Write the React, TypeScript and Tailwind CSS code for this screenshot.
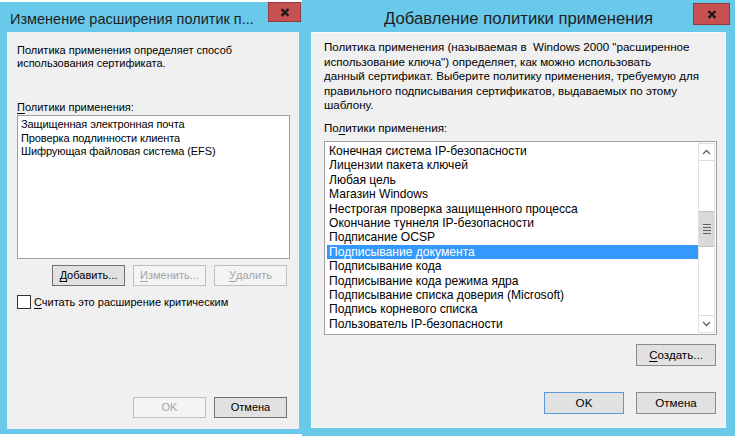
import React from 'react';

type BtnKind = 'default' | 'normal' | 'disabled' | 'focus';

const btnStyles: Record<BtnKind, string> = {
  default: 'border-[#707070] bg-[#e1e1e1] text-black',
  normal: 'border-[#8a8a8a] bg-[#e1e1e1] text-black',
  disabled: 'border-[#bfbfbf] bg-[#f4f4f4] text-[#a3a3a3]',
  focus: 'border-[#5b9bd5] bg-[#e1e1e1] text-black',
};

const Btn = ({
  kind,
  className,
  children,
}: {
  kind: BtnKind;
  className: string;
  children: React.ReactNode;
}) => (
  <div className={`flex items-center justify-center border whitespace-nowrap ${btnStyles[kind]} ${className}`}>
    {children}
  </div>
);

// underlined access key letter
const K = ({ c }: { c: string }) => <span className="underline underline-offset-[2px]">{c}</span>;

const CloseButton = ({ className }: { className: string }) => (
  <div className={`flex items-center justify-center bg-[#c75050] border border-[#8f3b3b] ${className}`}>
    <svg width="10" height="9" viewBox="0 0 10 9">
      <path d="M1.5 1.2 L8.5 7.8 M8.5 1.2 L1.5 7.8" stroke="#1a1a1a" strokeWidth="2.3" />
    </svg>
  </div>
);

const addPolicies = [
  'Конечная система IP-безопасности',
  'Лицензии пакета ключей',
  'Любая цель',
  'Магазин Windows',
  'Нестрогая проверка защищенного процесса',
  'Окончание туннеля IP-безопасности',
  'Подписание OCSP',
  'Подписывание документа',
  'Подписывание кода',
  'Подписывание кода режима ядра',
  'Подписывание списка доверия (Microsoft)',
  'Подпись корневого списка',
  'Пользователь IP-безопасности',
  'Проверка подлинности клиента',
];

const Chevron = ({ up }: { up?: boolean }) => (
  <svg width="9" height="6" viewBox="0 0 9 6">
    <path
      d={up ? 'M1 5 L4.5 1.5 L8 5' : 'M1 1 L4.5 4.5 L8 1'}
      fill="none"
      stroke="#606060"
      strokeWidth="1.3"
    />
  </svg>
);

export default function App() {
  return (
    <div className="relative w-[735px] h-[436px] overflow-hidden bg-white font-['Liberation_Sans',Arial,sans-serif] text-black">
      {/* Left dialog (inactive) */}
      <div className="absolute left-0 top-[2px] w-[306px] h-[432px] bg-[#69c9ea] flex flex-col">
        <div className="h-[30px] shrink-0 flex items-start">
          <div className="pl-[10px] pt-[7px] text-[14.5px] leading-[20px] text-[#1e1e1e] whitespace-nowrap">
            Изменение расширения политик п...
          </div>
          <CloseButton className="ml-auto mr-[5px] w-[33px] h-[20px]" />
        </div>
        <div className="mx-[7px] h-[397px] bg-[#f0f0f0] flex flex-col pl-[10px] text-[11px] leading-[13px]">
          <div className="mt-[12px]">
            Политика применения определяет способ
            <br />
            использования сертификата.
          </div>
          <div className="mt-[31px]">
            <K c="П" />олитики применения:
          </div>
          <div className="mt-[1px] w-[273px] h-[144px] border border-[#a0a0a0] bg-white pl-[3px] pt-[2px] leading-[13.5px] tracking-[-0.1px]">
            <div>Защищенная электронная почта</div>
            <div>Проверка подлинности клиента</div>
            <div>Шифрующая файловая система (EFS)</div>
          </div>
          <div className="mt-[6px] flex justify-end gap-[8px] pr-[12px]">
            <Btn kind="default" className="w-[73px] h-[21px]">
              <K c="Д" />обавить...
            </Btn>
            <Btn kind="disabled" className="w-[73px] h-[21px]">
              <K c="И" />зменить...
            </Btn>
            <Btn kind="disabled" className="w-[73px] h-[21px]">
              <K c="У" />далить
            </Btn>
          </div>
          <div className="mt-[9px] flex items-center gap-[3px]">
            <div className="w-[14px] h-[14px] border border-[#333333] bg-white" />
            <span>
              <K c="С" />читать это расширение критическим
            </span>
          </div>
          <div className="mt-auto mb-[11px] flex justify-end gap-[8px] pr-[12px]">
            <Btn kind="disabled" className="w-[73px] h-[21px]">
              OK
            </Btn>
            <Btn kind="default" className="w-[73px] h-[21px]">
              Отмена
            </Btn>
          </div>
        </div>
      </div>

      {/* Right dialog (active) */}
      <div className="absolute left-[302px] top-0 w-[433px] h-[436px] bg-[#69c9ea] flex flex-col">
        <div className="h-[32px] shrink-0 grid grid-cols-[1fr_auto_1fr] items-start">
          <div />
          <div className="pt-[8px] text-[16.7px] leading-[22px] text-[#1e1e1e] whitespace-nowrap">
            Добавление политики применения
          </div>
          <CloseButton className="justify-self-end mt-[3px] mr-[5px] w-[37px] h-[22px]" />
        </div>
        <div className="mx-[9px] h-[396px] bg-[#f0f0f0] border border-[#f6f9fa] flex flex-col pl-[12px] text-[11.6px] leading-[14.5px]">
          <div className="mt-[7px] whitespace-nowrap">
            Политика применения (называемая в&nbsp; Windows 2000 "расширенное
            <br />
            использование ключа") определяет, как можно использовать
            <br />
            данный сертификат. Выберите политику применения, требуемую для
            <br />
            правильного подписывания сертификатов, выдаваемых по этому
            <br />
            шаблону.
          </div>
          <div className="mt-[8px]">
            По<K c="л" />итики применения:
          </div>
          <div className="mt-[6px] w-[393px] h-[194px] border border-[#a0a0a0] bg-white p-[1px] flex">
            <div className="flex-1 overflow-hidden pl-[1px] pt-[1px] text-[12.1px]">
              {addPolicies.map((p, i) => (
                <div
                  key={p + i}
                  className={`h-[14.4px] leading-[14.4px] pl-[2px] whitespace-nowrap ${
                    i === 7 ? 'bg-[#3399ff] text-white' : ''
                  }`}
                >
                  {p}
                </div>
              ))}
            </div>
            <div className="w-[17px] flex flex-col border border-[#dedede] bg-white">
              <div className="h-[17px] flex items-center justify-center border-b border-[#dedede]">
                <Chevron up />
              </div>
              <div className="h-[50px]" />
              <div className="h-[36px] bg-[#d9d9d9] border-y border-[#c4c4c4] flex flex-col items-center justify-center gap-[2px]">
                <div className="w-[8px] h-[1px] bg-[#606060]" />
                <div className="w-[8px] h-[1px] bg-[#606060]" />
                <div className="w-[8px] h-[1px] bg-[#606060]" />
                <div className="w-[8px] h-[1px] bg-[#606060]" />
              </div>
              <div className="flex-1" />
              <div className="h-[17px] flex items-center justify-center border-t border-[#dedede]">
                <Chevron />
              </div>
            </div>
          </div>
          <div className="mt-[9px] flex justify-end pr-[9px]">
            <Btn kind="normal" className="w-[80px] h-[22px]">
              <K c="С" />оздать...
            </Btn>
          </div>
          <div className="mt-auto mb-[13px] flex justify-end gap-[12px] pr-[9px]">
            <Btn kind="focus" className="w-[80px] h-[22px]">
              OK
            </Btn>
            <Btn kind="normal" className="w-[80px] h-[22px]">
              Отмена
            </Btn>
          </div>
        </div>
      </div>
    </div>
  );
}
